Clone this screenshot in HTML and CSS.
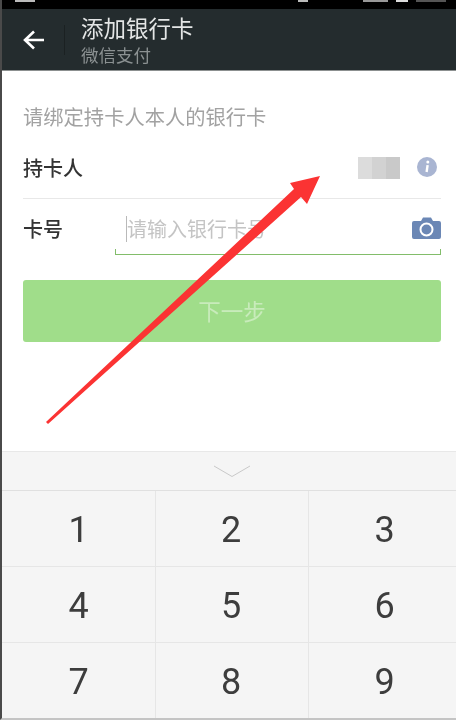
FILE: index.html
```html
<!DOCTYPE html>
<html lang="zh-CN">
<head>
<meta charset="utf-8">
<title>添加银行卡</title>
<link rel="stylesheet" href="styles.css">
</head>
<body>
<div class="phone">
  <div class="status">
    <i class="tick t1"></i><i class="tick t2"></i><i class="tick t3"></i><i class="tick t4"></i><i class="tick t5"></i>
  </div>
  <header class="bar">
    <svg class="back" width="22" height="20" viewBox="0 0 22 20"><path d="M21 10H2M11 1.5 2 10l9 8.500" fill="none" stroke="#fff" stroke-width="2.600"/></svg>
    <span class="sep"></span>
    <div class="titles">
      <div class="title">添加银行卡</div>
      <div class="sub">微信支付</div>
    </div>
  </header>
  <main class="content">
    <p class="intro">请绑定持卡人本人的银行卡</p>
    <div class="row holder">
      <span class="label">持卡人</span>
      <span class="mosaic"><i></i><i></i><i></i></span>
      <svg class="info" width="20" height="20" viewBox="0 0 20 20"><circle cx="10" cy="10" r="10" fill="#a9b5d2"/><circle cx="10.800" cy="5" r="1.500" fill="#fff"/><path d="M10.600 8.200 9.600 15" stroke="#fff" stroke-width="2.400" fill="none"/></svg>
    </div>
    <div class="row card">
      <span class="label">卡号</span>
      <div class="input">
        <span class="caret"></span><span class="placeholder">请输入银行卡号</span>
        <svg class="camera" width="29" height="22" viewBox="0 0 29 22"><path d="M2 4h7l2-3.500h8L21 4h6a2 2 0 0 1 2 2v14a2 2 0 0 1-2 2H2a2 2 0 0 1-2-2V6a2 2 0 0 1 2-2z" fill="#6b87b5"/><circle cx="14.500" cy="12.500" r="6" fill="none" stroke="#fff" stroke-width="2"/></svg>
      </div>
    </div>
    <button class="next" type="button">下一步</button>
  </main>
  <section class="keyboard">
    <div class="collapse">
      <svg width="38" height="13" viewBox="0 0 38 13"><path d="M1 1l18 10.500L37 1" fill="none" stroke="#c9c9c9" stroke-width="1"/></svg>
    </div>
    <div class="keys">
      <div class="key">1</div><div class="key">2</div><div class="key">3</div>
      <div class="key">4</div><div class="key">5</div><div class="key">6</div>
      <div class="key">7</div><div class="key">8</div><div class="key">9</div>
    </div>
  </section>
  <svg class="arrow" width="456" height="720" viewBox="0 0 456 720"><polygon points="46,422 294,189 290,183 320,176 307,204 301,197 48,424" fill="#fb3333"/></svg>
</div>
</body>
</html>
```
FILE: styles.css
```css
* { box-sizing: border-box; }
html, body { margin: 0; padding: 0; background: #fff; }
body { font-family: "Noto Sans CJK SC", "Noto Sans", sans-serif; }
.phone {
  position: relative;
  width: 456px;
  height: 720px;
  overflow: hidden;
  display: flex;
  flex-direction: column;
  border-left: 2px solid #4a4a4a;
  border-bottom: 2px solid #c4c4c4;
  filter: blur(0.4px);
}
.status {
  height: 9px;
  flex: none;
  background: #000;
  display: flex;
  align-items: flex-start;
}
.tick { display: block; height: 2px; background: #bbb; }
.t1 { width: 20px; margin-left: 13px; }
.t2 { width: 10px; margin-left: 263px; }
.t3 { width: 25px; margin-left: 55px; background: #999; }
.t4 { width: 12px; margin-left: 8px; background: #ddd; }
.t5 { width: 30px; margin-left: 8px; background: #555; }
.bar {
  height: 62px;
  flex: none;
  background: #242c2e;
  border-bottom: 1px solid #8c9090;
  display: flex;
  align-items: center;
}
.back { margin-left: 21px; flex: none; }
.sep { width: 1px; height: 30px; margin-left: 19px; background: #1b2122; }
.titles { margin-left: 16px; margin-top: -1px; }
.title { font-size: 22.5px; line-height: 32px; color: #e4e6e6; }
.sub { font-size: 17.500px; line-height: 24px; color: #8b9192; }
.content {
  flex: 1;
  padding: 0 15px 0 21px;
  display: flex;
  flex-direction: column;
}
.intro {
  margin: 31px 0 0;
  font-size: 20.300px;
  line-height: 28px;
  color: #a2a2a2;
}
.row { display: flex; align-items: center; }
.label { font-size: 20px; color: #333; line-height: 28px; font-weight: 500; }
.holder {
  height: 61px;
  margin-top: 8px;
  border-bottom: 1px solid #e8e8e8;
}
.mosaic { margin-left: auto; display: flex; width: 42px; height: 22px; }
.mosaic i { flex: 1; background: #dcdcdc; }
.mosaic i:nth-child(2) { background: #d2d2d2; }
.mosaic i:nth-child(3) { background: #c9c9c9; }
.info { margin: -2px 4px 0 17px; flex: none; }
.card { height: 56px; align-items: flex-start; }
.card .label { margin-top: 16px; width: 92px; flex: none; }
.input {
  position: relative;
  flex: 1;
  height: 56px;
  border-bottom: 1px solid #82bd6a;
  display: flex;
  align-items: center;
  padding-left: 11px;
  padding-top: 5px;
}
.input::before, .input::after {
  content: "";
  position: absolute;
  bottom: 0;
  width: 1px;
  height: 5px;
  background: #82bd6a;
}
.input::before { left: 0; }
.input::after { right: 0; }
.caret { width: 1px; height: 26px; background: #b9b9b9; flex: none; }
.placeholder { font-size: 20px; line-height: 28px; color: #c4c4c4; margin-left: 0; white-space: nowrap; }
.camera { position: absolute; right: 0; top: 18px; }
.next {
  margin-top: 25px;
  height: 62px;
  flex: none;
  border: 0;
  border-radius: 3px;
  background: #a0dd8a;
  color: #c8ebbb;
  font-family: inherit;
  font-size: 22.5px;
  padding: 0 0 3px;
}
.keyboard {
  flex: none;
  height: 267px;
  background: #f5f5f5;
  border-top: 1px solid #e8e8e8;
  display: flex;
  flex-direction: column;
}
.collapse {
  height: 39px;
  flex: none;
  display: flex;
  justify-content: center;
  align-items: center;
  border-bottom: 1px solid #e0e0e0;
  padding-left: 6px;
  padding-top: 1px;
}
.keys {
  flex: 1;
  display: grid;
  grid-template-columns: 154px 153px 1fr;
  grid-auto-rows: 76px;
}
.key {
  display: flex;
  align-items: center;
  justify-content: center;
  padding-top: 3px;
  font-family: Roboto, sans-serif;
  font-size: 36px;
  color: #3d3d3d;
  border-right: 1px solid #e6e6e6;
  border-bottom: 1px solid #e6e6e6;
}
.key:nth-child(3n+2) { padding-right: 2px; }
.key:nth-child(3n) { border-right: 0; padding-left: 4px; }
.arrow { position: absolute; left: -2px; top: 0; pointer-events: none; }
```
